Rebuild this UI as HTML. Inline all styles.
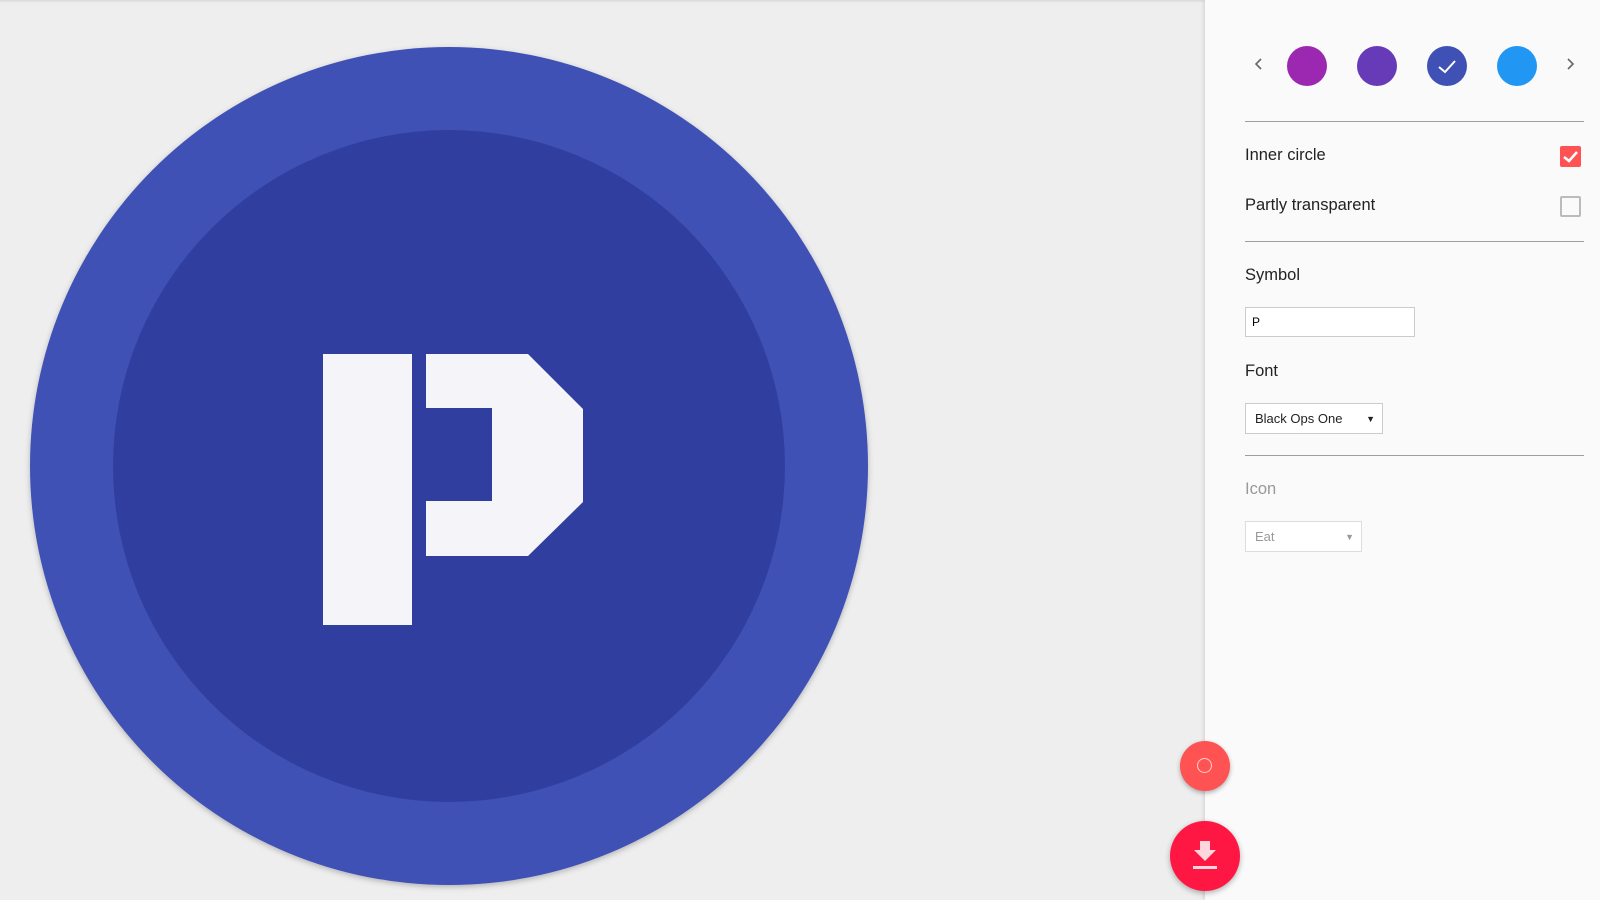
<!DOCTYPE html>
<html><head><style>
body{margin:0;width:1600px;height:900px;background:#eeeeee;position:relative;overflow:hidden;font-family:"Liberation Sans",sans-serif;}
.abs{position:absolute}
.panel{left:1205px;top:0;width:395px;height:900px;background:#fafafa;box-shadow:-1px 0 4px rgba(0,0,0,.12)}
.topsh{left:0;top:0;width:1600px;height:3px;background:linear-gradient(#d8d8d8,#eee);}
.sw{width:40px;height:40px;border-radius:50%;top:46px}
.hr{left:1245px;width:339px;height:1px;background:#9e9e9e}
.lbl{left:1245px;font-size:16.5px;color:#222}
.box{border:1px solid #ccc;background:#fff;font-size:13px;box-sizing:border-box;padding-left:9px;}
</style></head><body>
<div class="abs topsh"></div>
<svg class="abs" style="left:0;top:0" width="1205" height="900">
<defs><filter id="s"><feDropShadow dx="0" dy="2" stdDeviation="3" flood-opacity=".25"/></filter></defs>
<circle cx="449" cy="466" r="419" fill="#3f51b5" filter="url(#s)"/>
<circle cx="449" cy="466" r="336" fill="#303f9f"/>
<rect x="323" y="354" width="89" height="271" fill="#f5f5f9"/>
<path d="M426 354 L528 354 L583 409 L583 502 L528 556 L426 556 L426 501 L492 501 L492 408 L426 408 Z" fill="#f5f5f9"/>
</svg>
<div class="abs panel"></div>
<svg class="abs" style="left:1250px;top:55px" width="340" height="20"><path d="M11 4 L6 9 L11 14" stroke="#666" stroke-width="1.6" fill="none"/><path d="M318 4 L323 9 L318 14" stroke="#666" stroke-width="1.6" fill="none"/></svg>
<div class="abs sw" style="left:1287px;background:#9c27b0"></div>
<div class="abs sw" style="left:1357px;background:#673ab7"></div>
<div class="abs sw" style="left:1427px;background:#3f51b5"><svg width="40" height="40"><path d="M12 21 L18 26 L28 15" stroke="#fff" stroke-width="2" fill="none"/></svg></div>
<div class="abs sw" style="left:1497px;background:#2196f3"></div>
<div class="abs hr" style="top:121px"></div>
<div class="abs lbl" style="top:146px">Inner circle</div>
<div class="abs" style="left:1560px;top:146px;width:21px;height:21px;background:#ff5252;border-radius:2px"><svg width="21" height="21"><path d="M4 11 L9 15 L17 6" stroke="#fff" stroke-width="2.5" fill="none"/></svg></div>
<div class="abs lbl" style="top:196px">Partly transparent</div>
<div class="abs" style="left:1560px;top:196px;width:17px;height:17px;border:2px solid #bbb;border-radius:2px"></div>
<div class="abs hr" style="top:241px"></div>
<div class="abs lbl" style="top:266px">Symbol</div>
<div class="abs box" style="left:1245px;top:307px;width:170px;height:30px;line-height:28px;padding-left:6px;font-size:12px">P</div>
<div class="abs lbl" style="top:362px">Font</div>
<div class="abs box" style="left:1245px;top:403px;width:138px;height:31px;line-height:30px;color:#222">Black Ops One<span style="position:absolute;right:7px;font-size:9px">▼</span></div>
<div class="abs hr" style="top:455px"></div>
<div class="abs lbl" style="top:480px;color:#999">Icon</div>
<div class="abs box" style="left:1245px;top:521px;width:117px;height:31px;line-height:30px;color:#999;border-color:#ddd">Eat<span style="position:absolute;right:7px;font-size:9px">▼</span></div>
<div class="abs" style="left:1180px;top:741px;width:50px;height:50px;border-radius:50%;background:#ff5252;box-shadow:0 2px 5px rgba(0,0,0,.3)"><div style="position:absolute;left:17px;top:17px;width:13px;height:13px;border:1.5px solid #ffd0d0;border-radius:50%"></div></div>
<div class="abs" style="left:1170px;top:821px;width:70px;height:70px;border-radius:50%;background:#ff1744;box-shadow:0 2px 6px rgba(0,0,0,.3)"><svg width="70" height="70"><path d="M30 20 L40 20 L40 29 L46 29 L35 40 L24 29 L30 29 Z" fill="#ffd6de"/><rect x="23" y="45" width="24" height="3" fill="#ffd6de"/></svg></div>
</body></html>
